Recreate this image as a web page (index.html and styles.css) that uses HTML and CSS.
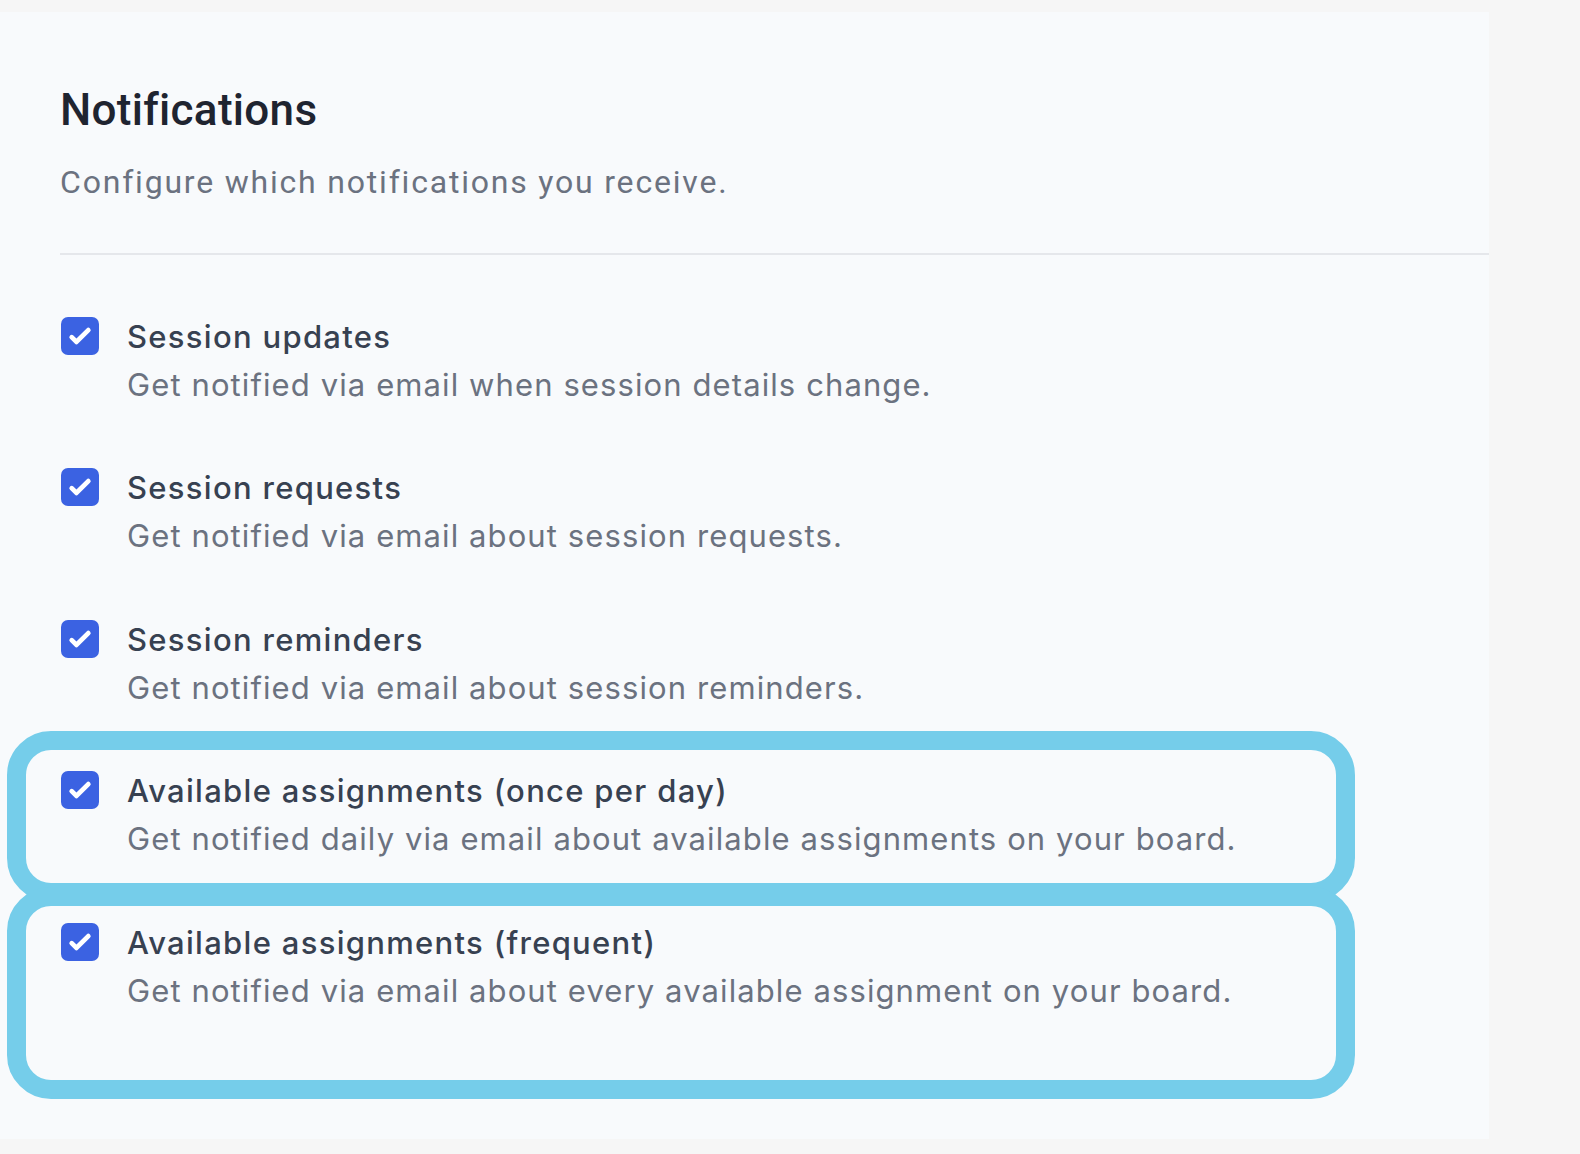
FILE: index.html
```html
<!DOCTYPE html>
<html lang="en">
<head>
<meta charset="utf-8">
<title>Notifications</title>
<link rel="stylesheet" href="styles.css">
</head>
<body>
<main class="panel">
  <header class="head">
    <h1 class="title">Notifications</h1>
    <p class="subtitle">Configure which notifications you receive.</p>
  </header>
  <hr class="divider">
  <ul class="list">
    <li class="item">
      <span class="check"><svg viewBox="0 0 16 16" fill="#fff"><path d="M12.207 4.793a1 1 0 010 1.414l-5 5a1 1 0 01-1.414 0l-2-2a1 1 0 011.414-1.414L6.5 9.086l4.293-4.293a1 1 0 011.414 0z"/></svg></span>
      <div class="text">
        <div class="label">Session updates</div>
        <div class="desc">Get notified via email when session details change.</div>
      </div>
    </li>
    <li class="item">
      <span class="check"><svg viewBox="0 0 16 16" fill="#fff"><path d="M12.207 4.793a1 1 0 010 1.414l-5 5a1 1 0 01-1.414 0l-2-2a1 1 0 011.414-1.414L6.5 9.086l4.293-4.293a1 1 0 011.414 0z"/></svg></span>
      <div class="text">
        <div class="label">Session requests</div>
        <div class="desc">Get notified via email about session requests.</div>
      </div>
    </li>
    <li class="item">
      <span class="check"><svg viewBox="0 0 16 16" fill="#fff"><path d="M12.207 4.793a1 1 0 010 1.414l-5 5a1 1 0 01-1.414 0l-2-2a1 1 0 011.414-1.414L6.5 9.086l4.293-4.293a1 1 0 011.414 0z"/></svg></span>
      <div class="text">
        <div class="label">Session reminders</div>
        <div class="desc">Get notified via email about session reminders.</div>
      </div>
    </li>
    <li class="item mark mark-a">
      <span class="check"><svg viewBox="0 0 16 16" fill="#fff"><path d="M12.207 4.793a1 1 0 010 1.414l-5 5a1 1 0 01-1.414 0l-2-2a1 1 0 011.414-1.414L6.5 9.086l4.293-4.293a1 1 0 011.414 0z"/></svg></span>
      <div class="text">
        <div class="label">Available assignments (once per day)</div>
        <div class="desc">Get notified daily via email about available assignments on your board.</div>
      </div>
    </li>
    <li class="item mark mark-b">
      <span class="check"><svg viewBox="0 0 16 16" fill="#fff"><path d="M12.207 4.793a1 1 0 010 1.414l-5 5a1 1 0 01-1.414 0l-2-2a1 1 0 011.414-1.414L6.5 9.086l4.293-4.293a1 1 0 011.414 0z"/></svg></span>
      <div class="text">
        <div class="label">Available assignments (frequent)</div>
        <div class="desc">Get notified via email about every available assignment on your board.</div>
      </div>
    </li>
  </ul>
</main>
</body>
</html>
```

FILE: styles.css
```css
html, body {
  margin: 0;
  padding: 0;
}
body {
  background: #f6f6f6;
  width: 1580px;
  height: 1154px;
  overflow: hidden;
}
.panel {
  margin-top: 12px;
  width: 1489px;
  height: 1127px;
  box-sizing: border-box;
  background: #f8fafc;
  padding: 72px 0 0 60px;
}
.head {
  display: flex;
  flex-direction: column;
}
.title {
  margin: 0;
  font-family: Roboto, "Liberation Sans", sans-serif;
  font-weight: 500;
  font-size: 44px;
  line-height: 52.8px;
  letter-spacing: 0.3px;
  color: #1f2430;
}
.subtitle {
  margin: 25px 0 0;
  font-family: Roboto, "Liberation Sans", sans-serif;
  font-size: 32px;
  line-height: 40px;
  letter-spacing: 1.8px;
  color: #6b7280;
}
.divider {
  margin: 51px 0 0;
  border: 0;
  height: 2px;
  background: #e5e7eb;
}
.list {
  list-style: none;
  margin: 58px 0 0;
  padding: 0;
  display: flex;
  flex-direction: column;
  gap: 55.5px;
}
.item {
  display: flex;
  align-items: flex-start;
  gap: 28px;
  font-family: Inter, "Noto Sans", sans-serif;
}
.check {
  flex: none;
  width: 38px;
  height: 38px;
  margin-top: 4px;
  margin-left: 1px;
  border-radius: 7px;
  background: #3b62e2;
  display: flex;
}
.check svg {
  width: 38px;
  height: 38px;
}
.text {
  display: flex;
  flex-direction: column;
}
.label {
  font-size: 31px;
  line-height: 48px;
  letter-spacing: 1.3px;
  font-weight: 500;
  color: #374151;
}
.desc {
  font-size: 31px;
  line-height: 48px;
  letter-spacing: 1.1px;
  color: #6b7280;
}
.mark {
  position: relative;
}
.mark::after {
  content: "";
  position: absolute;
  left: -53px;
  width: 1348px;
  box-sizing: border-box;
  border: 19px solid #75cdea;
  border-radius: 44px;
  pointer-events: none;
}
.mark-a::after {
  top: -36px;
  height: 171px;
}
.mark-b::after {
  top: -32px;
  height: 212px;
}
```
